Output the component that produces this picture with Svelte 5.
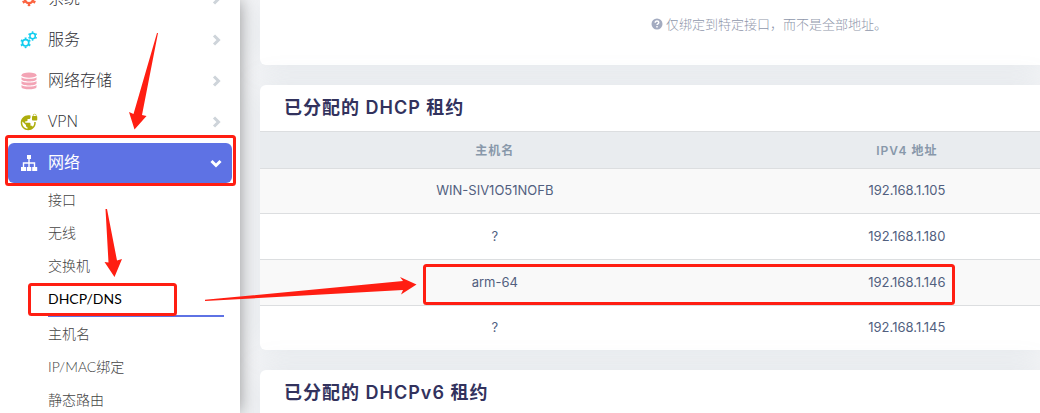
<script lang="ts">
  interface MenuItem {
    label: string;
    icon: string;
    active?: boolean;
  }

  interface Lease {
    host: string;
    ip: string;
  }

  const menu: MenuItem[] = [
    { label: '系统', icon: 'gear' },
    { label: '服务', icon: 'gears' },
    { label: '网络存储', icon: 'database' },
    { label: 'VPN', icon: 'vpn' },
    { label: '网络', icon: 'sitemap', active: true },
  ];

  const submenu = ['接口', '无线', '交换机', 'DHCP/DNS', '主机名', 'IP/MAC绑定', '静态路由'];

  const leases: Lease[] = [
    { host: 'WIN-SIV1O51NOFB', ip: '192.168.1.105' },
    { host: '?', ip: '192.168.1.180' },
    { host: 'arm-64', ip: '192.168.1.146' },
    { host: '?', ip: '192.168.1.145' },
  ];

  let current = $state('DHCP/DNS');
</script>

{#snippet gear(cx: number, cy: number, r: number, w: number)}
  <circle {cx} {cy} {r} stroke-width={w} />
  <circle {cx} {cy} r={r + w * 0.8} stroke-width={w} pathLength="60" stroke-dasharray="4 6" stroke-dashoffset="-3" />
{/snippet}

{#snippet icon(name: string)}
  <svg class="icon {name}" viewBox={name === 'vpn' ? '0 0 24 24' : '0 0 18 18'} aria-hidden="true">
    {#if name === 'gear'}
      <g fill="none" stroke="currentColor">{@render gear(9, 9, 4.1, 2.4)}</g>
    {:else if name === 'gears'}
      <g fill="none" stroke="currentColor">
        {@render gear(5.6, 11.8, 3.2, 1.7)}
        {@render gear(12.6, 5, 2.7, 1.5)}
      </g>
    {:else if name === 'database'}
      <ellipse cx="9" cy="3.2" rx="7.5" ry="2.6" />
      <path d="M1.5 5.2c2 2 13 2 15 0v2.400c-1 2.600-14 2.600-15 0z" />
      <path d="M1.5 9.100c2 2 13 2 15 0v2.400c-1 2.600-14 2.600-15 0z" />
      <path d="M1.5 13c2 2 13 2 15 0v2.200c-1 2.800-14 2.800-15 0z" />
    {:else if name === 'vpn'}
      <path d="M22 4v-.5a2.5 2.5 0 0 0-5 0V4c-.55 0-1 .45-1 1v4c0 .55.45 1 1 1h5c.55 0 1-.45 1-1V5c0-.55-.45-1-1-1zm-.8 0h-3.4v-.5a1.7 1.7 0 0 1 3.4 0V4zm-2.28 8c.04.33.08.66.08 1 0 2.08-.8 3.97-2.1 5.39-.26-.81-1-1.39-1.9-1.39h-1v-3c0-.55-.45-1-1-1H7v-2h2c.55 0 1-.45 1-1V8h2c1.1 0 2-.9 2-2V3.46C13.05 3.16 12.05 3 11 3 5.48 3 1 7.48 1 13s4.48 10 10 10 10-4.48 10-10c0-.34-.02-.67-.05-1h-2.03zM10 20.93c-3.95-.49-7-3.85-7-7.93 0-.62.08-1.21.21-1.79L8 16v1c0 1.1.9 2 2 2v1.93z" />
    {:else}
      <path d="M7 1h4v4H7zM1 13h5v4H1zM6.800 13h4.500v4H6.800zM12.200 13h5v4h-5z" />
      <path d="M9 5v8M3.500 13V9h11v4" fill="none" stroke="currentColor" stroke-width="1.400" />
    {/if}
  </svg>
{/snippet}

<div class="page">
  <aside class="sidebar">
    <nav>
      <ul class="menu">
        {#each menu as item}
          <li>
            <a class="menu-item" class:active={item.active} href="#{item.icon}">
              {@render icon(item.icon)}
              <span class="label">{item.label}</span>
              <svg class="chevron" viewBox="0 0 12 12" aria-hidden="true">
                <path d={item.active ? 'M1.500 4 6 8.500 10.500 4' : 'M4 1.500 8.500 6 4 10.500'} />
              </svg>
            </a>
          </li>
        {/each}
      </ul>
      <ul class="submenu">
        {#each submenu as label}
          <li>
            <a href="#{label}" class:current={label === current} onclick={() => (current = label)}>{label}</a>
          </li>
        {/each}
      </ul>
    </nav>
  </aside>

  <main>
    <section class="card options">
      <p class="help">
        <svg viewBox="0 0 12 12" aria-hidden="true">
          <circle cx="6" cy="6" r="5.500" />
          <path d="M4.200 4.800c0-2.400 3.600-2.200 3.600-.2 0 1.300-1.800 1.200-1.800 2.500M6 8v1.400" />
        </svg>
        <span>仅绑定到特定接口，而不是全部地址。</span>
      </p>
    </section>

    <section class="card">
      <h3>已分配的 DHCP 租约</h3>
      <table>
        <thead>
          <tr>
            <th class="host">主机名</th>
            <th>IPV4 地址</th>
          </tr>
        </thead>
        <tbody>
          {#each leases as lease}
            <tr>
              <td>{lease.host}</td>
              <td>{lease.ip}</td>
            </tr>
          {/each}
        </tbody>
      </table>
    </section>

    <section class="card last">
      <h3>已分配的 DHCPv6 租约</h3>
    </section>
  </main>

  <svg class="marks" width="1040" height="413" aria-hidden="true">
    <rect x="6.500" y="136.500" width="228" height="48" rx="2" />
    <rect x="29.500" y="284.500" width="146" height="30" rx="2" />
    <rect x="424.500" y="265.500" width="529" height="38" rx="2" />
    <path d="M157 33h1L142 115l4.500 1L134.500 129.500 129 112l4.500 2z" />
    <path d="M105.500 209h1.500l10 51.500 5-1.500-7.500 18-10-15 4 .5z" />
    <path d="M205 299.800 403 281l-3-4 16.500 7.500L401 294.500l2-4.500-198 11z" />
  </svg>
</div>

<style>
  :global(body) {
    margin: 0;
    background: #f4f5f7;
  }
  .page {
    position: relative;
    display: flex;
    height: 100vh;
    overflow: hidden;
    font-family: Inter, "Noto Sans CJK SC", sans-serif;
    font-size: 13px;
    color: #525f7f;
  }
  ul {
    list-style: none;
    margin: 0;
    padding: 0;
  }
  a {
    color: inherit;
    text-decoration: none;
  }

  .sidebar {
    flex: none;
    width: 240px;
    background: #fff;
    box-shadow: 0 0 16px rgba(0, 0, 0, 0.4);
    z-index: 1;
  }
  nav {
    margin-top: -21px;
    padding: 0 8px;
  }
  .menu {
    display: flex;
    flex-direction: column;
    gap: 1px;
  }
  .menu-item {
    display: flex;
    align-items: center;
    gap: 10px;
    height: 40px;
    padding: 0 10px 0 12px;
    border-radius: 6px;
    font-size: 16px;
    line-height: 20px;
    color: #303036;
  }
  .label {
    flex: 1;
    padding-bottom: 3px;
    font-family: "Open Sans", "Noto Sans CJK SC", sans-serif;
    font-weight: 300;
  }
  .menu-item.active {
    background: #5e72e4;
    color: #fff;
  }
  .active .label {
    font-weight: 400;
  }
  .icon {
    width: 18px;
    height: 18px;
    fill: currentColor;
  }
  .gear { color: #fb6340; }
  .gears { color: #11cdef; }
  .database { color: #f3a4b5; }
  .vpn { color: #adad0c; }
  .sitemap { color: #fff; }
  .chevron {
    width: 12px;
    height: 12px;
    fill: none;
    stroke: #ced4da;
    stroke-width: 3;
  }
  .active .chevron {
    stroke: #fff;
  }

  .submenu {
    padding: 0 8px 0 40px;
  }
  .submenu a {
    display: block;
    font-family: Lato, "Noto Sans CJK SC", sans-serif;
    font-size: 14px;
    font-weight: 300;
    line-height: 33px;
    color: #444;
  }
  .submenu a.current {
    border-bottom: 2px solid #5e72e4;
    font-weight: 400;
    color: #000;
  }

  main {
    flex: 1;
    min-width: 0;
    padding-left: 20px;
  }
  .card {
    margin-bottom: 20px;
    border-radius: 6px 0 0 6px;
    background: #fff;
    box-shadow: 0 0 32px rgba(136, 152, 170, 0.15);
    overflow: hidden;
  }
  .card.options {
    display: grid;
    grid-template-columns: 1fr 1fr;
    padding: 14px 0 31px;
    border-top-left-radius: 0;
  }
  .help {
    grid-column: 2;
    display: flex;
    align-items: center;
    gap: 3px;
    margin: 0;
    font-weight: 300;
    line-height: 20px;
    color: #8f97ab;
  }
  .help svg {
    width: 12px;
    height: 12px;
    margin-left: 1px;
    fill: #a3abc0;
  }
  .help path {
    fill: none;
    stroke: #fff;
    stroke-width: 1.500;
  }
  h3 {
    margin: 0;
    padding: 0 24px;
    font-size: 18px;
    font-weight: 600;
    line-height: 46px;
    letter-spacing: 1px;
    color: #32325d;
  }
  .last {
    min-height: 100px;
  }

  table {
    width: calc(100% + 44px);
    border-collapse: separate;
    border-spacing: 0;
    table-layout: fixed;
  }
  .host {
    width: 57%;
  }
  th,
  td {
    box-sizing: border-box;
    height: 46px;
    padding: 0 0 2px;
    border-top: 1px solid #dcdee0;
    text-align: center;
  }
  th {
    height: 37px;
    background: #e9ecef;
    font-size: 12px;
    font-weight: 600;
    letter-spacing: 1px;
    color: #8898aa;
  }
  tbody tr:nth-child(odd) {
    background: #f9f9f9;
  }
  tbody tr:first-child td,
  tbody tr:last-child td {
    height: 45px;
  }

  .marks {
    position: absolute;
    top: 0;
    left: 0;
    z-index: 2;
    pointer-events: none;
  }
  .marks rect {
    fill: none;
    stroke: #ff1e12;
    stroke-width: 3;
  }
  .marks path {
    fill: #ff1e12;
  }
</style>
